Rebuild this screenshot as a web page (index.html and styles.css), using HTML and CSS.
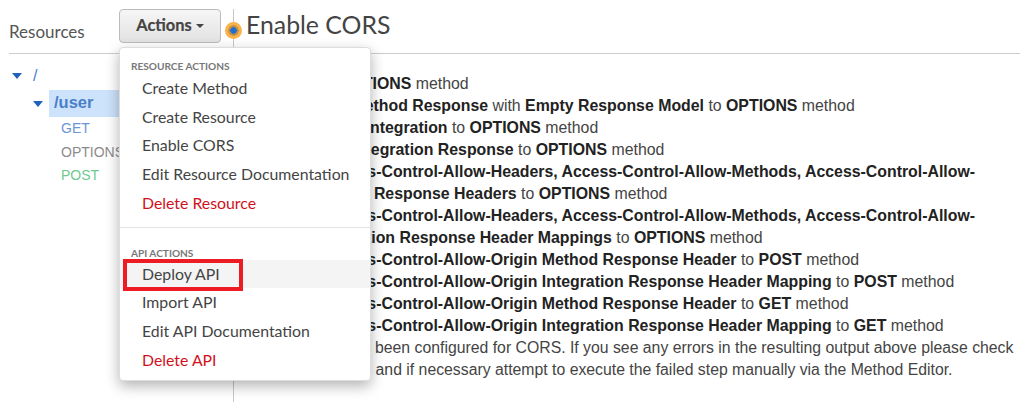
FILE: index.html
```html
<html lang="en">
<head>
    <meta charset="UTF-8">
    <meta name="viewport" content="width=device-width, initial-scale=1.0">
    <title>Enable CORS</title>

    <link rel="stylesheet" href="styles.css">
</head>
<body>
    <div class="page">
        <div class="side">
            <div class="side__head">
                <span class="side__title">Resources</span>
                <div class="actions">
                    <button class="actions__btn">Actions<span class="caret"></span></button>
                    <div class="menu">
                        <p class="menu__label">RESOURCE ACTIONS</p>
                        <a class="menu__item">Create Method</a>
                        <a class="menu__item">Create Resource</a>
                        <a class="menu__item">Enable CORS</a>
                        <a class="menu__item">Edit Resource Documentation</a>
                        <a class="menu__item menu__item--danger">Delete Resource</a>
                        <div class="menu__line"></div>
                        <p class="menu__label">API ACTIONS</p>
                        <a class="menu__item menu__item--hover">Deploy API</a>
                        <a class="menu__item">Import API</a>
                        <a class="menu__item">Edit API Documentation</a>
                        <a class="menu__item menu__item--danger">Delete API</a>
                        <div class="menu__mark"></div>
                    </div>
                </div>
                <span class="dot"></span>
            </div>
            <div class="tree">
                <div class="tree__root"><span class="tree__arrow"></span><span class="tree__slash">/</span></div>
                <div class="tree__res"><span class="tree__arrow"></span><span class="tree__sel">/user</span></div>
                <div class="tree__verb tree__verb--get">GET</div>
                <div class="tree__verb tree__verb--options">OPTIONS</div>
                <div class="tree__verb tree__verb--post">POST</div>
            </div>
        </div>
        <div class="main">
            <div class="main__head">
                <h1>Enable CORS</h1>
            </div>
            <ul class="steps">
                <li>Create <b>OPTIONS</b> method</li>
                <li>Add <b>200 Method Response</b> with <b>Empty Response Model</b> to <b>OPTIONS</b> method</li>
                <li>Add <b>Mock Integration</b> to <b>OPTIONS</b> method</li>
                <li>Add <b>200 Integration Response</b> to <b>OPTIONS</b> method</li>
                <li>Add <b>Access-Control-Allow-Headers, Access-Control-Allow-Methods, Access-Control-Allow-Origin Method Response Headers</b> to <b>OPTIONS</b> method</li>
                <li>Add <b>Access-Control-Allow-Headers, Access-Control-Allow-Methods, Access-Control-Allow-Origin Integration Response Header Mappings</b> to <b>OPTIONS</b> method</li>
                <li>Add <b>Access-Control-Allow-Origin Method Response Header</b> to <b>POST</b> method</li>
                <li>Add <b>Access-Control-Allow-Origin Integration Response Header Mapping</b> to <b>POST</b> method</li>
                <li>Add <b>Access-Control-Allow-Origin Method Response Header</b> to <b>GET</b> method</li>
                <li>Add <b>Access-Control-Allow-Origin Integration Response Header Mapping</b> to <b>GET</b> method</li>
            </ul>
            <p class="note">Your resource has been configured for CORS. If you see any errors in the resulting output above please check the error message and if necessary attempt to execute the failed step manually via the Method Editor.</p>
        </div>
    </div>
</body>
</html>
```

FILE: styles.css
```css
html, body {
    margin: 0;
    height: 402px;
    overflow: hidden;
    background-color: #fff;
    font-family: "Liberation Sans", Arial, sans-serif;
}

.page {
    display: flex;
    padding: 9px 4px 0 9px;
    height: 393px;
}

.side {
    width: 224px;
    border-right: 1px solid #c8c8c8;
    flex-shrink: 0;
}

.side__head {
    position: relative;
    display: flex;
    align-items: center;
    height: 44px;
    border-bottom: 1px solid #ccc;
}

.side__title {
    font-family: Lato, sans-serif;
    font-size: 17px;
    color: #555;
    width: 110px;
}

.actions {
    position: relative;
    margin-top: -10px;
}

.actions__btn {
    display: flex;
    align-items: center;
    justify-content: center;
    width: 102px;
    height: 34px;
    padding: 0 0 3px 0;
    font-family: Lato, sans-serif;
    font-size: 16.4px;
    font-weight: bold;
    -webkit-text-stroke: 0.2px #444;
    color: #444;
    background: linear-gradient(#f6f6f6, #e2e2e2);
    border: 1px solid #bbb;
    border-radius: 4px;
}

.caret {
    margin: 2px 0 0 4px;
    border-top: 4px solid #444;
    border-left: 4px solid transparent;
    border-right: 4px solid transparent;
}

.menu {
    position: absolute;
    top: 38px;
    left: 0;
    z-index: 5;
    width: 252px;
    height: 334px;
    box-sizing: border-box;
    padding-top: 11px;
    background-color: #fff;
    border: 1px solid #ddd;
    border-radius: 4px;
    box-shadow: 0 5px 14px rgba(0, 0, 0, 0.3);
}

.menu__label {
    margin: 0 0 1px 0;
    padding-left: 11px;
    font-family: Lato, sans-serif;
    font-size: 10.1px;
    font-weight: bold;
    line-height: 14px;
    color: #777;
}

.menu__line + .menu__label {
    margin-bottom: 0;
}

.menu__item {
    display: block;
    padding-left: 22px;
    font-family: Lato, sans-serif;
    font-size: 15.85px;
    line-height: 28.7px;
    color: #444;
}

.menu__item--danger {
    color: #d0111b;
}

.menu__item--hover {
    background-color: #f4f4f4;
}

.menu__line {
    height: 1px;
    margin: 9px 0 18px 0;
    background-color: #e2e2e2;
}

.menu__mark {
    position: absolute;
    left: 3px;
    top: 211px;
    width: 120px;
    height: 32px;
    box-sizing: border-box;
    border: 4px solid #ed1c24;
}

.dot {
    position: absolute;
    left: 216px;
    top: 13px;
    width: 17px;
    height: 17px;
    border-radius: 50%;
    background: radial-gradient(circle, #1f6fd0 0 3px, #c9913f 3.5px 5px, #f9b24c 5.5px);
}

.tree {
    padding-top: 11px;
}

.tree__root {
    display: flex;
    align-items: center;
    height: 22px;
    padding-left: 3px;
}

.tree__arrow {
    width: 0;
    height: 0;
    border-top: 6px solid #1f62bd;
    border-left: 5px solid transparent;
    border-right: 5px solid transparent;
}

.tree__slash {
    margin-left: 11px;
    font-size: 16px;
    color: #4a7fc9;
}

.tree__res {
    display: flex;
    align-items: center;
    height: 27px;
    margin-top: 3px;
    padding-left: 24px;
}

.tree__sel {
    flex: 1;
    margin-left: 6px;
    padding-left: 5px;
    font-size: 16.5px;
    font-weight: bold;
    line-height: 25px;
    padding-bottom: 2px;
    color: #4a7fc9;
    background-color: #cde3fb;
}

.tree__verb {
    padding-left: 52px;
    font-size: 14px;
    line-height: 23.5px;
}

.tree__verb--get {
    color: #6b95d3;
}

.tree__verb--options {
    color: #8b8b8b;
}

.tree__verb--post {
    color: #6fc98f;
}

.main {
    flex: 1;
    min-width: 0;
}

.main__head {
    height: 44px;
    padding-left: 12px;
    border-bottom: 1px solid #ccc;
}

.main__head h1 {
    margin: 0;
    font-family: Lato, sans-serif;
    font-size: 24.8px;
    font-weight: normal;
    line-height: 32px;
    color: #444;
}

.steps {
    list-style: none;
    margin: 19px 0 0 0;
    padding: 0 0 0 28px;
    font-size: 15.87px;
    line-height: 22px;
    color: #444;
}

.steps li {
    text-indent: 26px;
}

.steps b {
    color: #222;
}

.note {
    margin: 0;
    padding-left: 9px;
    font-size: 15.8px;
    line-height: 22px;
    color: #444;
}
```
